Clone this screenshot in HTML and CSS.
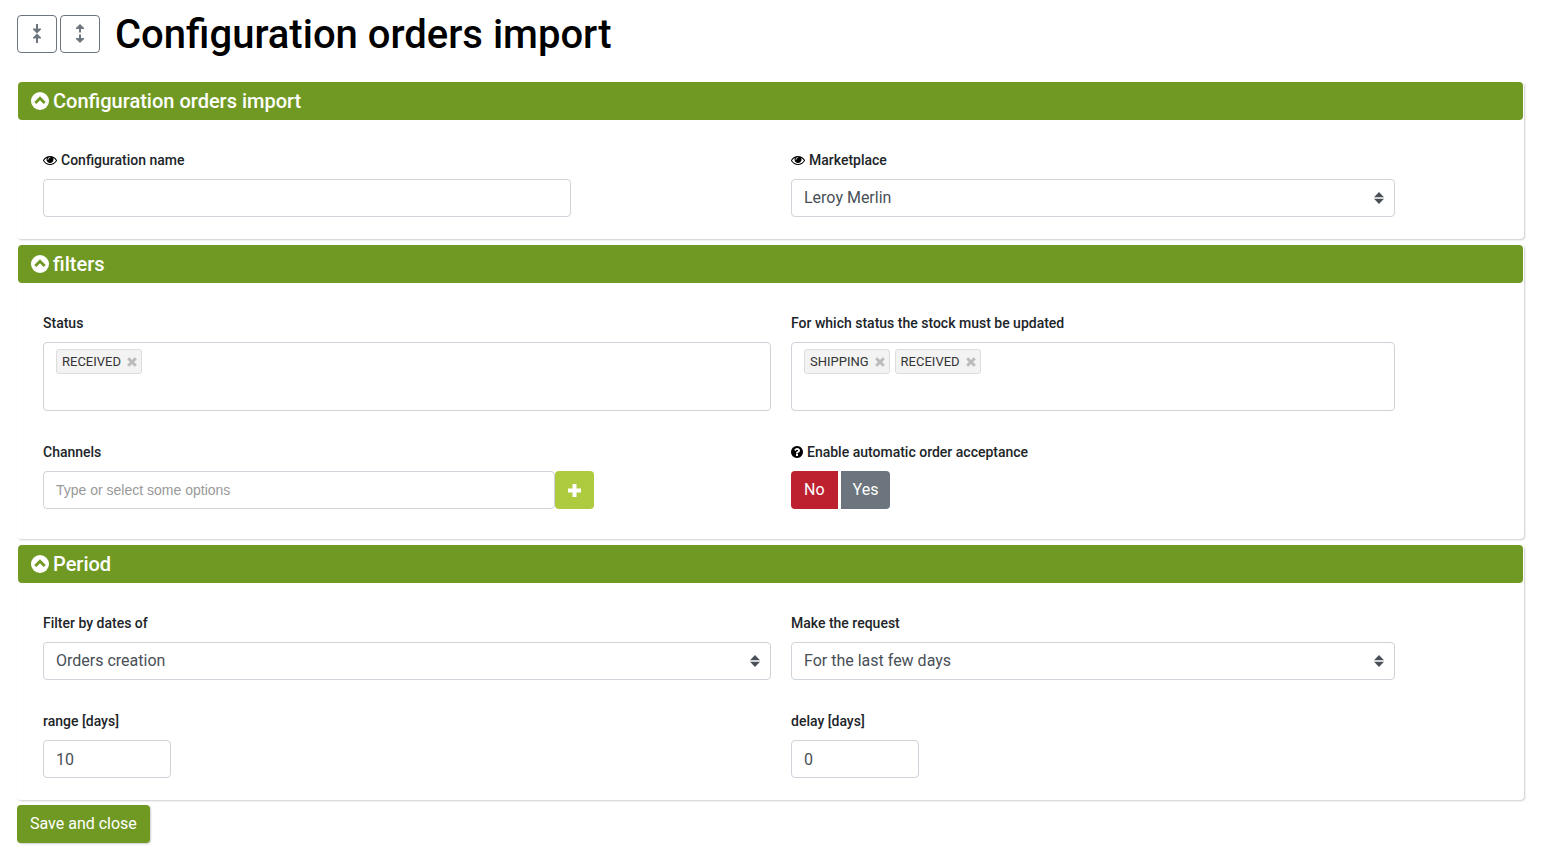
FILE: index.html
```html
<!DOCTYPE html>
<html lang="en">
<head>
    <meta charset="UTF-8">
    <meta name="viewport" content="width=device-width, initial-scale=1.0">
    <title>Configuration orders import</title>
    <link rel="stylesheet" href="styles.css">
</head>
<body>

<svg class="sprite" aria-hidden="true">
    <symbol id="icon-up" viewBox="0 0 18 18">
        <circle cx="9" cy="9" r="9" fill="#fff"/>
        <path d="M4.3 10.9L9 6.2l4.7 4.7" fill="none" stroke="#709923" stroke-width="2.8"/>
    </symbol>
    <symbol id="icon-eye" viewBox="0 0 1792 1792">
        <path d="M1664 960q-152-236-381-353 61 104 61 225 0 185-131.500 316.500t-316.500 131.500-316.500-131.500-131.500-316.500q0-121 61-225-229 117-381 353 133 205 333.500 326.500t434.500 121.500 434.500-121.500 333.500-326.500zm-720-384q0-20-14-34t-34-14q-125 0-214.500 89.500t-89.500 214.500q0 20 14 34t34 14 34-14 14-34q0-86 61-147t147-61q20 0 34-14t14-34zm848 384q0 34-20 69-140 230-376.500 368.500t-499.500 138.500-499.500-139-376.500-368q-20-35-20-69t20-69q140-229 376.500-368t499.500-139 499.500 139 376.500 368q20 35 20 69z"/>
    </symbol>
    <symbol id="icon-help" viewBox="128 128 1536 1536">
        <path d="M1024 1376v-192q0-14-9-23t-23-9h-192q-14 0-23 9t-9 23v192q0 14 9 23t23 9h192q14 0 23-9t9-23zm256-672q0-88-55.500-163t-138.500-116-170-41q-243 0-371 213-15 24 8 42l132 100q7 6 19 6 16 0 25-12 53-68 86-92 34-24 86-24 48 0 85.500 26t37.500 59q0 38-20 61t-68 45q-63 28-115.500 86.500t-52.500 125.500v36q0 14 9 23t23 9h192q14 0 23-9t9-23q0-19 21.500-49.500t54.500-49.500q32-18 49-28.500t46-35 44.500-48 28-60.500 12.500-81zm384 192q0 209-103 385.500t-279.500 279.500-385.500 103-385.500-103-279.500-279.500-103-385.500 103-385.500 279.500-279.500 385.500-103 385.500 103 279.500 279.500 103 385.500z"/>
    </symbol>
    <symbol id="icon-times" viewBox="0 0 10 10">
        <path d="M1.200 1.200l7.600 7.600M8.800 1.200l-7.600 7.600" fill="none" stroke="currentColor" stroke-width="3"/>
    </symbol>
</svg>

<header class="page-header">
    <button type="button" class="btn-outline" aria-label="Collapse all">
        <svg width="10" height="20" viewBox="0 0 10 20">
            <path d="M5 0v8M5 19v-8" stroke="currentColor" stroke-width="2"/>
            <path d="M1 4.500h2.500L5 6l1.500-1.500H9v1L5 9.500 1 5.500zM1 14.500h2.500L5 13l1.500 1.500H9v-1L5 9.500 1 13.500z" fill="currentColor"/>
        </svg>
    </button>
    <button type="button" class="btn-outline" aria-label="Expand all">
        <svg width="10" height="20" viewBox="0 0 10 20">
            <path d="M5 1v7.500M5 18v-7.500" stroke="currentColor" stroke-width="2"/>
            <path d="M1 5h2.500L5 3.500 6.500 5H9V4L5 0 1 4zM1 14h2.500L5 15.500 6.500 14H9v1l-4 4-4-4z" fill="currentColor"/>
        </svg>
    </button>
    <h1>Configuration orders import</h1>
</header>

<form id="importForm">
    <section class="card">
        <h2 class="card-header"><svg class="icon-toggle"><use href="#icon-up"/></svg>Configuration orders import</h2>
        <div class="card-body">
            <div class="form-group">
                <label for="config-name"><svg class="icon-eye"><use href="#icon-eye"/></svg>Configuration name</label>
                <input type="text" id="config-name" class="form-control name-input">
            </div>
            <div class="form-group narrow">
                <label for="marketplace"><svg class="icon-eye"><use href="#icon-eye"/></svg>Marketplace</label>
                <select id="marketplace" class="form-control">
                    <option>Leroy Merlin</option>
                </select>
            </div>
        </div>
    </section>

    <section class="card">
        <h2 class="card-header"><svg class="icon-toggle"><use href="#icon-up"/></svg>filters</h2>
        <div class="card-body">
            <div class="form-group">
                <label for="status">Status</label>
                <div class="tag-box">
                    <span class="tag">RECEIVED<button type="button" aria-label="Remove RECEIVED"><svg><use href="#icon-times"/></svg></button></span>
                    <input type="text" id="status" class="tag-input">
                </div>
            </div>
            <div class="form-group narrow">
                <label for="stock-status">For which status the stock must be updated</label>
                <div class="tag-box">
                    <span class="tag">SHIPPING<button type="button" aria-label="Remove SHIPPING"><svg><use href="#icon-times"/></svg></button></span>
                    <span class="tag">RECEIVED<button type="button" aria-label="Remove RECEIVED"><svg><use href="#icon-times"/></svg></button></span>
                    <input type="text" id="stock-status" class="tag-input">
                </div>
            </div>
            <div class="form-group">
                <label for="channels">Channels</label>
                <div class="input-group">
                    <input type="text" id="channels" class="form-control" placeholder="Type or select some options">
                    <button type="button" class="btn-add" aria-label="Add channel">
                        <svg width="13" height="13" viewBox="0 0 13 13"><path d="M6.500 0v13M0 6.500h13" stroke="#fff" stroke-width="4"/></svg>
                    </button>
                </div>
            </div>
            <div class="form-group" role="group" aria-labelledby="acceptance">
                <span class="label" id="acceptance"><svg class="icon-help"><use href="#icon-help"/></svg>Enable automatic order acceptance</span>
                <div class="switch">
                    <button type="button" class="btn btn-no" aria-pressed="true">No</button>
                    <button type="button" class="btn btn-yes" aria-pressed="false">Yes</button>
                </div>
            </div>
        </div>
    </section>

    <section class="card">
        <h2 class="card-header"><svg class="icon-toggle"><use href="#icon-up"/></svg>Period</h2>
        <div class="card-body">
            <div class="form-group">
                <label for="dates">Filter by dates of</label>
                <select id="dates" class="form-control">
                    <option>Orders creation</option>
                </select>
            </div>
            <div class="form-group narrow">
                <label for="request">Make the request</label>
                <select id="request" class="form-control">
                    <option>For the last few days</option>
                </select>
            </div>
            <div class="form-group">
                <label for="range">range [days]</label>
                <input type="text" id="range" class="form-control days-input" value="10">
            </div>
            <div class="form-group">
                <label for="delay">delay [days]</label>
                <input type="text" id="delay" class="form-control days-input" value="0">
            </div>
        </div>
    </section>

    <button type="submit" class="btn btn-save">Save and close</button>
</form>

</body>
</html>
```
FILE: styles.css
```css
* {
    box-sizing: border-box;
}
body {
    margin: 0;
    padding: 9px 27px 6px 17px;
    font-family: Roboto, sans-serif;
    font-size: 16px;
    line-height: 24px;
    color: #212529;
    background-color: #fff;
}
button, input, select {
    font: inherit;
}
button {
    cursor: pointer;
}
.sprite {
    display: none;
}
.page-header {
    display: flex;
    align-items: center;
    gap: 3px;
    margin-bottom: 23px;
}
.page-header h1 {
    margin: 0 0 0 12px;
    padding-top: 2px;
    font-size: 40px;
    font-weight: 500;
    line-height: 48px;
    color: #000;
}
.btn-outline {
    display: flex;
    align-items: center;
    justify-content: center;
    width: 40px;
    height: 38px;
    padding: 0;
    color: #6c757d;
    background-color: #fff;
    border: 1px solid #6c757d;
    border-radius: 4px;
}

/* Cards */
.card {
    padding: 0 1px;
    border-radius: 4px;
    box-shadow: 1px 1px 2px rgba(0, 0, 0, 0.2);
}
.card + .card {
    margin-top: 6px;
}
.card-header {
    display: flex;
    align-items: center;
    gap: 4px;
    height: 38px;
    margin: 0;
    padding: 0 13px;
    font-size: 20px;
    font-weight: 500;
    color: #fff;
    background-color: #709923;
    border-radius: 4px;
}
.icon-toggle {
    width: 18px;
    height: 18px;
}
.card-body {
    display: grid;
    grid-template-columns: 1fr 1fr;
    gap: 31px 20px;
    padding: 30px 4px 22px 25px;
}

/* Form fields */
.form-group label, .label {
    display: flex;
    align-items: center;
    gap: 4px;
    height: 20px;
    margin-bottom: 9px;
    font-size: 14px;
    font-weight: 500;
}
.narrow {
    width: 83%;
}
.icon-eye {
    width: 14px;
    height: 14px;
}
.icon-help {
    width: 12px;
    height: 12px;
}
.form-control {
    display: block;
    width: 100%;
    height: 38px;
    padding: 6px 12px;
    color: #495057;
    background-color: #fff;
    border: 1px solid #ced4da;
    border-radius: 4px;
}
select.form-control {
    appearance: none;
    background: #fff url("data:image/svg+xml,%3Csvg xmlns='http://www.w3.org/2000/svg' viewBox='0 0 10 12'%3E%3Cpath fill='%23495057' d='M5 0L0 5.300h10zM5 12L0 6.700h10z'/%3E%3C/svg%3E") no-repeat right 10px center / 10px 12px;
}
.name-input {
    max-width: 528px;
}
.days-input {
    max-width: 128px;
}
.tag-box {
    display: flex;
    flex-wrap: wrap;
    align-items: flex-start;
    gap: 5px;
    min-height: 69px;
    padding: 6px 12px;
    border: 1px solid #ced4da;
    border-radius: 4px;
}
.tag {
    display: flex;
    align-items: center;
    gap: 6px;
    height: 25px;
    padding: 0 4px 0 5px;
    font-size: 13px;
    color: #333;
    background-color: #f3f3f3;
    border: 1px solid #ddd;
    border-radius: 3px;
}
.tag button {
    display: flex;
    padding: 0;
    color: #bbb;
    background: none;
    border: none;
}
.tag svg {
    width: 10px;
    height: 10px;
}
.tag-input {
    flex: 1;
    min-width: 20px;
    height: 25px;
    padding: 0;
    background: none;
    border: none;
    outline: none;
}
.input-group {
    display: flex;
    max-width: 551px;
}
.input-group .form-control {
    flex: 1;
    font-family: "Liberation Sans", sans-serif;
    font-size: 14px;
}
.input-group .form-control::placeholder {
    color: #999;
}
.btn-add {
    display: flex;
    align-items: center;
    justify-content: center;
    width: 39px;
    height: 38px;
    padding: 0;
    background-color: #aecb40;
    border: none;
    border-radius: 4px;
}

/* Buttons */
.btn {
    height: 38px;
    padding: 0 13px;
    color: #fff;
    border: none;
    border-radius: 4px;
}
.switch {
    display: flex;
    gap: 3px;
    margin-bottom: 8px;
}
.btn-no {
    background-color: #bd2130;
    border-radius: 4px 0 0 4px;
}
.btn-yes {
    padding: 0 12px;
    background-color: #6c757d;
    border-radius: 0 4px 4px 0;
}
.btn-save {
    margin-top: 5px;
    background-color: #709923;
    box-shadow: 1px 1px 2px rgba(0, 0, 0, 0.2);
}
```
